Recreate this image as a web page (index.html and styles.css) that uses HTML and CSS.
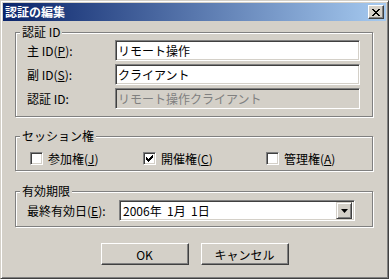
FILE: index.html
```html
<!DOCTYPE html>
<html lang="ja">
<head>
    <meta charset="UTF-8">
    <title>認証の編集</title>
    <link rel="stylesheet" href="styles.css">
</head>
<body>
    <div class="window">
        <div class="titlebar">
            <span class="title">認証の編集</span>
            <button class="close" aria-label="閉じる">
                <svg width="8" height="7" viewBox="0 0 8 7">
                    <path d="M0 0h2v1h-2zM6 0h2v1h-2zM1 1h2v1h-2zM5 1h2v1h-2zM2 2h4v1h-4zM3 3h2v1h-2zM2 4h4v1h-4zM1 5h2v1h-2zM5 5h2v1h-2zM0 6h2v1h-2zM6 6h2v1h-2z" fill="#000"/>
                </svg>
            </button>
        </div>

        <div class="content">
            <div class="group group-auth">
                <span class="legend">認証 ID</span>
                <div class="row">
                    <label class="row-label">主 ID(<u>P</u>):</label>
                    <input class="field" type="text" value="リモート操作">
                </div>
                <div class="row">
                    <label class="row-label">副 ID(<u>S</u>):</label>
                    <input class="field" type="text" value="クライアント">
                </div>
                <div class="row">
                    <label class="row-label">認証 ID:</label>
                    <input class="field" type="text" value="リモート操作クライアント" disabled>
                </div>
            </div>

            <div class="group group-session">
                <span class="legend">セッション権</span>
                <div class="checks">
                    <label class="check"><span class="box"></span>参加権(<u>J</u>)</label>
                    <label class="check"><span class="box checked">
                        <svg width="7" height="7" viewBox="0 0 7 7">
                            <path d="M6 0h1v1h-1zM5 1h2v1h-2zM0 2h1v1h-1zM4 2h3v1h-3zM0 3h2v1h-2zM3 3h3v1h-3zM0 4h5v1h-5zM1 5h3v1h-3zM2 6h1v1h-1z" fill="#000"/>
                        </svg>
                    </span>開催権(<u>C</u>)</label>
                    <label class="check"><span class="box"></span>管理権(<u>A</u>)</label>
                </div>
            </div>

            <div class="group group-expire">
                <span class="legend">有効期限</span>
                <div class="row">
                    <label class="row-label wide">最終有効日(<u>E</u>):</label>
                    <div class="combo">
                        <span class="combo-value">2006年  1月  1日</span>
                        <span class="combo-btn">
                            <svg width="7" height="4" viewBox="0 0 7 4">
                                <path d="M0 0h7l-3.5 4z" fill="#000"/>
                            </svg>
                        </span>
                    </div>
                </div>
            </div>

            <div class="buttons">
                <button class="btn">OK</button>
                <button class="btn">キャンセル</button>
            </div>
        </div>
    </div>
</body>
</html>
```

FILE: styles.css
```css
* {
    box-sizing: border-box;
}
body {
    margin: 0;
    font-family: "Noto Sans CJK JP", "DejaVu Sans", sans-serif;
    font-size: 12px;
    color: #000;
    background: #d4d0c8;
}
.window {
    width: 389px;
    height: 279px;
    background: #d4d0c8;
    border: 1px solid;
    border-color: #d4d0c8 #404040 #404040 #d4d0c8;
    box-shadow: inset 1px 1px #fff, inset -1px -1px #808080;
    padding: 2px;
}
.titlebar {
    height: 18px;
    display: flex;
    align-items: center;
    justify-content: space-between;
    padding: 0 2px 0 2px;
    background: linear-gradient(to right, #0a246a, #a6caf0);
}
.title {
    color: #fff;
    font-weight: bold;
    font-size: 12px;
    line-height: 18px;
}
.close {
    width: 16px;
    height: 14px;
    padding: 0;
    display: flex;
    align-items: center;
    justify-content: center;
    background: #d4d0c8;
    border: 1px solid;
    border-color: #fff #404040 #404040 #fff;
    box-shadow: inset -1px -1px #808080;
}
.content {
    padding: 11px 0 0 12px;
}
.group {
    position: relative;
    width: 358px;
    border: 1px solid #808080;
    box-shadow: inset 1px 1px #fff, 1px 1px #fff;
}
.legend {
    position: absolute;
    top: -9px;
    left: 4px;
    padding: 0 2px;
    line-height: 16px;
    background: #d4d0c8;
}
.group-auth {
    height: 85px;
    padding: 7px 0 0 11px;
}
.group-session {
    height: 35px;
    margin-top: 19px;
    padding: 15px 0 0 14px;
}
.group-expire {
    height: 36px;
    margin-top: 20px;
    padding: 8px 0 0 11px;
}
.row {
    display: flex;
    align-items: center;
    height: 21px;
}
.row + .row {
    margin-top: 3px;
}
.row-label {
    width: 88px;
    line-height: 16px;
}
.row-label.wide {
    width: 92px;
}
.field {
    width: 245px;
    height: 21px;
    margin: 0;
    padding: 0 2px;
    font: inherit;
    color: #000;
    background: #fff;
    border: 1px solid;
    border-color: #808080 #fff #fff #808080;
    box-shadow: inset 1px 1px #404040, inset -1px -1px #d4d0c8;
    outline: none;
}
.field:disabled {
    background: #d4d0c8;
    color: #808080;
}
.checks {
    display: grid;
    grid-template-columns: 113px 123px auto;
    height: 13px;
    align-items: center;
}
.check {
    display: flex;
    align-items: center;
    line-height: 13px;
}
.box {
    width: 13px;
    height: 13px;
    margin-right: 5px;
    display: flex;
    align-items: center;
    justify-content: center;
    background: #fff;
    border: 1px solid;
    border-color: #808080 #fff #fff #808080;
    box-shadow: inset 1px 1px #404040, inset -1px -1px #d4d0c8;
}
.combo {
    width: 236px;
    height: 21px;
    display: flex;
    align-items: center;
    justify-content: space-between;
    padding: 2px;
    background: #fff;
    border: 1px solid;
    border-color: #808080 #fff #fff #808080;
    box-shadow: inset 1px 1px #404040, inset -1px -1px #d4d0c8;
}
.combo-value {
    padding-left: 1px;
    line-height: 16px;
    white-space: pre;
}
.combo-btn {
    width: 16px;
    height: 17px;
    display: flex;
    align-items: center;
    justify-content: center;
    background: #d4d0c8;
    border: 1px solid;
    border-color: #d4d0c8 #404040 #404040 #d4d0c8;
    box-shadow: inset 1px 1px #fff, inset -1px -1px #808080;
}
.buttons {
    display: flex;
    justify-content: center;
    gap: 12px;
    margin-top: 16px;
    padding-right: 12px;
}
.btn {
    width: 88px;
    height: 22px;
    padding: 0;
    font: inherit;
    color: #000;
    background: #d4d0c8;
    border: 1px solid;
    border-color: #fff #404040 #404040 #fff;
    box-shadow: inset -1px -1px #808080;
}
```
